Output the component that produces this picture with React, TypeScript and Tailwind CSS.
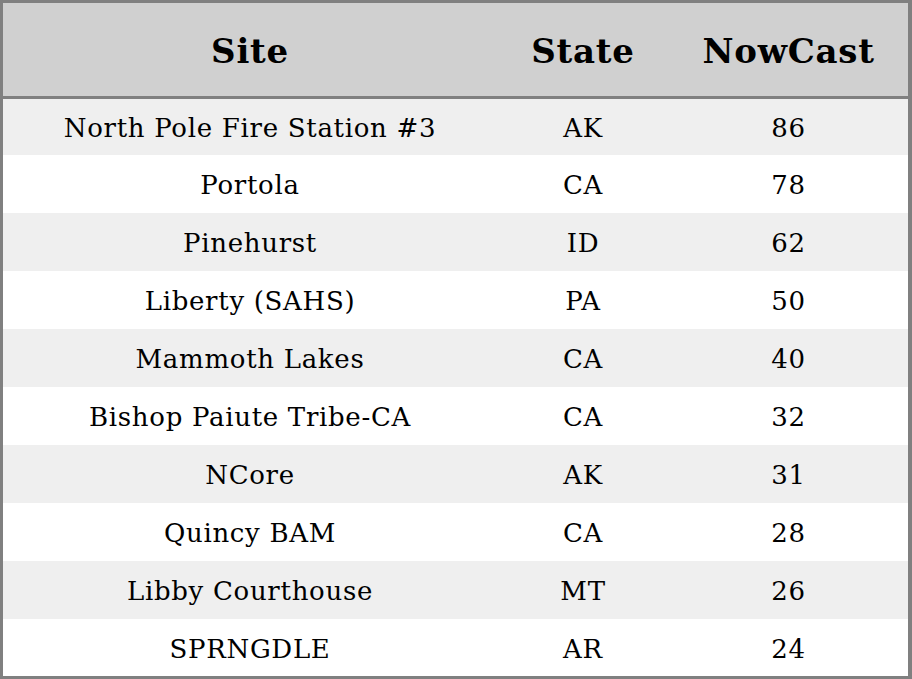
const rows: [string, string, number][] = [
  ["North Pole Fire Station #3", "AK", 86],
  ["Portola", "CA", 78],
  ["Pinehurst", "ID", 62],
  ["Liberty (SAHS)", "PA", 50],
  ["Mammoth Lakes", "CA", 40],
  ["Bishop Paiute Tribe-CA", "CA", 32],
  ["NCore", "AK", 31],
  ["Quincy BAM", "CA", 28],
  ["Libby Courthouse", "MT", 26],
  ["SPRNGDLE", "AR", 24],
];

const rowHeights = ["h-[56px]", "h-[58px]", "h-[58px]", "h-[58px]", "h-[58px]", "h-[58px]", "h-[58px]", "h-[58px]", "h-[58px]", "h-[57px]"];

export default function App() {
  return (
    <div
      className="w-[912px] h-[679px] bg-white text-black"
      style={{ fontFamily: '"DejaVu Serif", "Liberation Serif", serif' }}
    >
      <div className="w-full h-full border-[3px] border-r-4 border-[#808080] flex flex-col">
        <div className="grid grid-cols-[494px_172px_1fr] h-[96px] shrink-0 bg-[#d0d0d0] border-b-[3px] border-[#808080] text-[34px] tracking-[0.75px] font-bold items-center text-center pt-1">
          <div>Site</div>
          <div>State</div>
          <div>NowCast</div>
        </div>
        {rows.map(([site, state, value], i) => (
          <div
            key={site}
            className={`grid grid-cols-[494px_172px_1fr] shrink-0 items-center text-center text-[26px] tracking-[0.7px] pt-[3px] ${rowHeights[i]} ${
              i % 2 === 0 ? "bg-[#efefef]" : "bg-white"
            }`}
          >
            <div>{site}</div>
            <div>{state}</div>
            <div>{value}</div>
          </div>
        ))}
      </div>
    </div>
  );
}
